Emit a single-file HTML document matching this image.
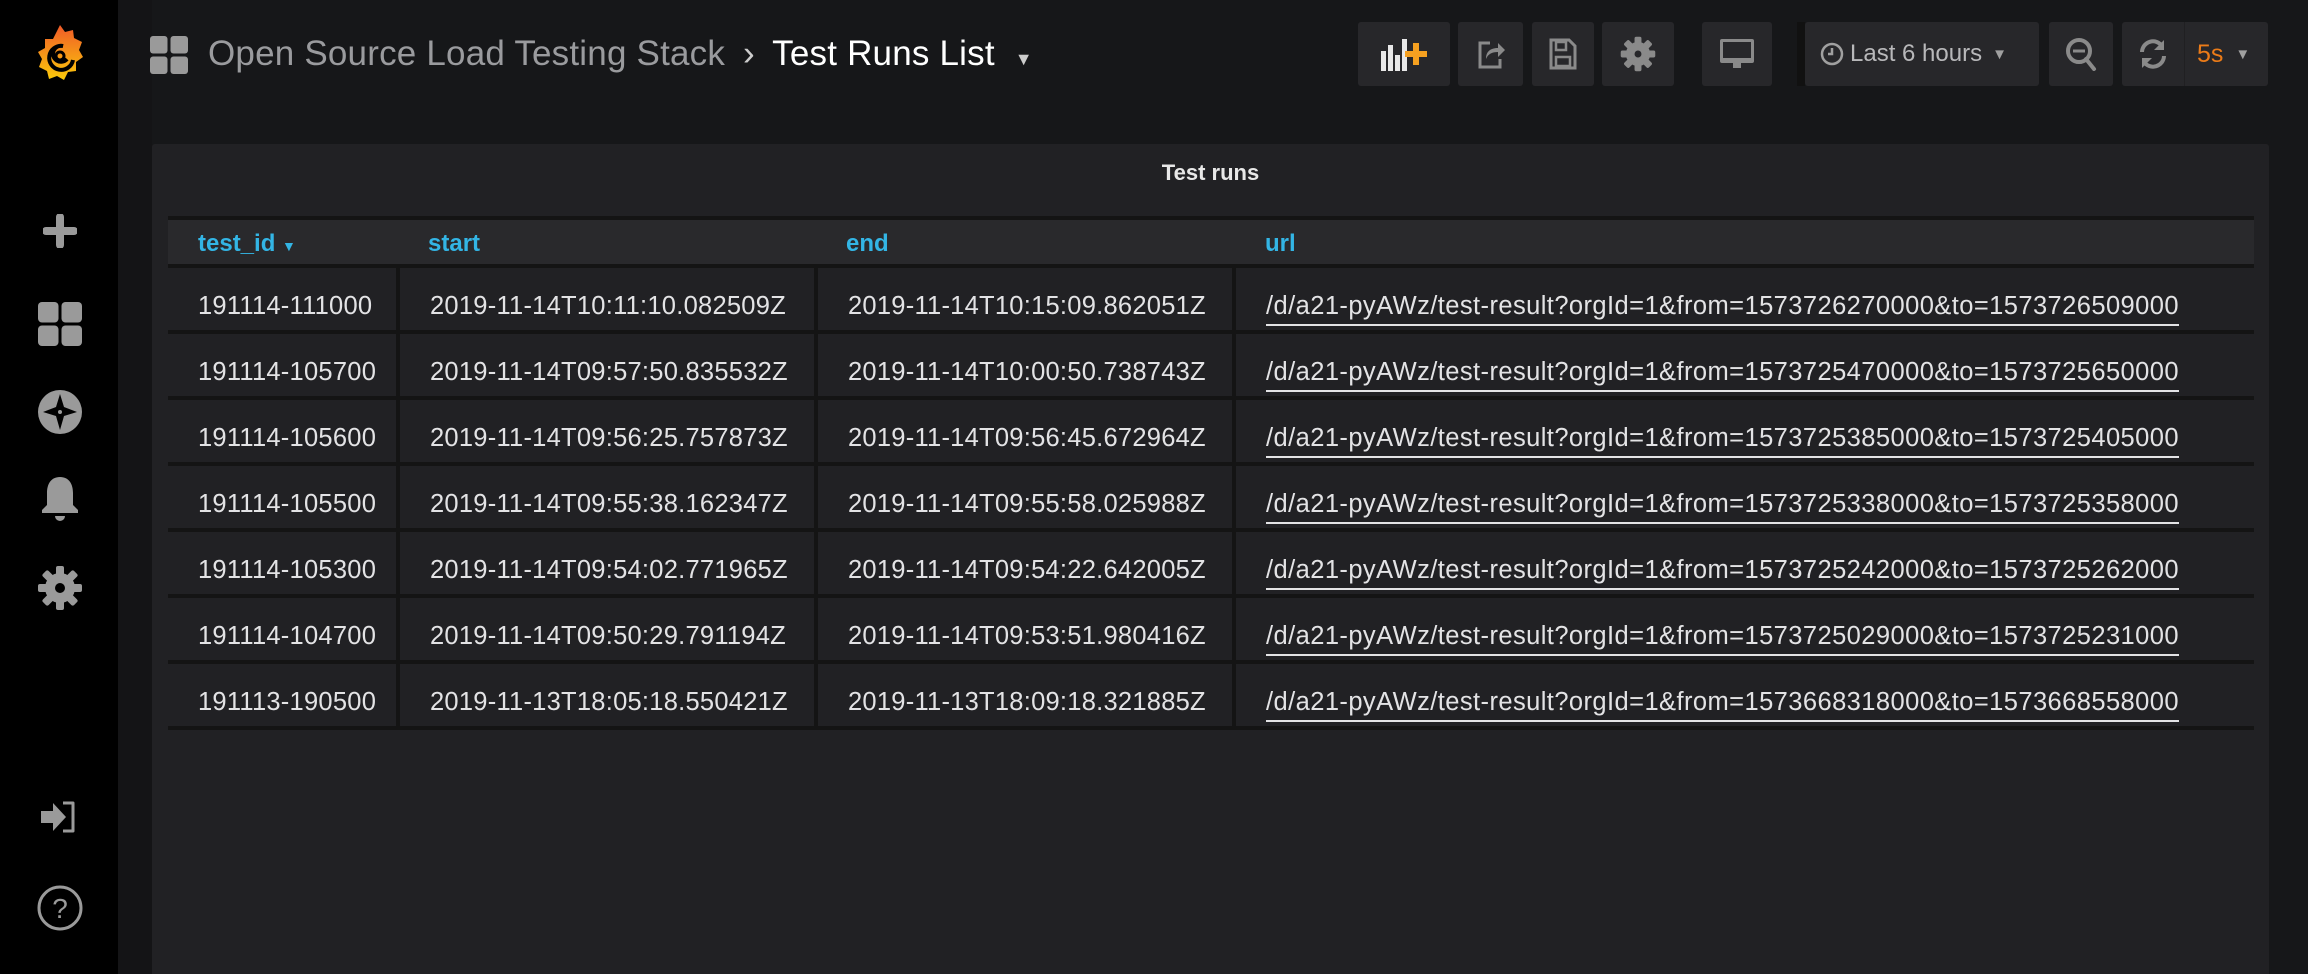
<!DOCTYPE html>
<html><head><meta charset="utf-8"><style>
*{margin:0;padding:0;box-sizing:border-box}
html,body{width:2308px;height:974px;overflow:hidden}
body{background:#161719;font-family:"Liberation Sans",sans-serif;position:relative}
.side{position:absolute;left:0;top:0;width:118px;height:974px;background:#000}
.strip{position:absolute;left:118px;top:0;width:34px;height:974px;background:#141416}
.ic{position:absolute;left:60px;transform:translate(-50%,-50%)}
.crumb{position:absolute;top:34px;left:208px;font-size:35px;color:#9a9b9e;white-space:nowrap;letter-spacing:0.2px}
.crumb b{font-weight:normal;color:#fff}
.btn{position:absolute;top:22px;height:64px;background:#27272a;border-radius:3px;display:flex;align-items:center;justify-content:center}
.panel{position:absolute;left:152px;top:144px;width:2117px;height:830px;background:#212124;border-radius:3px 3px 0 0}
.ptitle{position:absolute;top:160px;left:152px;width:2117px;text-align:center;color:#e8e8e8;font-weight:bold;font-size:22px}
.thead{position:absolute;left:168px;top:216px;width:2086px;height:52px;background:#141414}
.thead .in{position:absolute;left:0;top:4px;width:100%;height:44px;background:#29292c}
.th{position:absolute;top:10px;color:#33b5e5;font-weight:bold;font-size:24px}
.row{position:absolute;left:168px;width:2086px;height:66px;background:#141414}
.cell{position:absolute;top:0;height:62px;background:#212124;color:#e3e3e5;font-size:25.5px;line-height:62px;padding-top:7px;padding-left:30px;white-space:nowrap;letter-spacing:0.25px}
.cell u{text-decoration:none;border-bottom:2px solid #e3e3e5;padding-bottom:4px;letter-spacing:0.42px}
</style></head><body>
<div class="side"></div><div class="strip"></div>
<svg class="ic" style="top:55px" width="46" height="64" viewBox="0 0 46 64"><defs><linearGradient id="g" x1="0" y1="0" x2="0" y2="1"><stop offset="0" stop-color="#f05a28"/><stop offset="1" stop-color="#fbca0a"/></linearGradient></defs><path d="M23 2l5 7 8-2 1 8 8 4-3 8 4 7-7 5v9l-8 1-4 8-7-4-8 3-2-8-8-4 3-8-4-7 7-4 0-9 8 0z" fill="url(#g)"/><path d="M30 36a8 8 0 1 1-4-13a12 12 0 1 0 10 14" fill="none" stroke="#000" stroke-width="4"/><circle cx="23" cy="33" r="4" fill="none" stroke="#000" stroke-width="3"/></svg>
<svg class="ic" style="top:231px" width="34" height="34" viewBox="0 0 34 34"><path d="M17 3v28M3 17h28" stroke="#9a9a9a" stroke-width="8" stroke-linecap="round"/></svg>
<svg class="ic" style="top:324px" width="44" height="44" viewBox="0 0 44 44" fill="#9a9a9a"><rect x="0" y="0" width="20.5" height="20.5" rx="4"/><rect x="23.5" y="0" width="20.5" height="20.5" rx="4"/><rect x="0" y="23.5" width="20.5" height="20.5" rx="4"/><rect x="23.5" y="23.5" width="20.5" height="20.5" rx="4"/></svg>
<svg class="ic" style="top:412px" width="44" height="44" viewBox="0 0 44 44"><circle cx="22" cy="22" r="22" fill="#9a9a9a"/><path d="M22 4l4 13 13 5-13 4-4 14-4-14-13-4 13-5z" fill="#000"/><circle cx="22" cy="22" r="2" fill="#9a9a9a"/></svg>
<svg class="ic" style="top:500px" width="38" height="46" viewBox="0 0 38 46" fill="#9a9a9a"><path d="M19 0c9 0 13 7 13 16v12l5 5v3H1v-3l5-5V16C6 7 10 0 19 0z"/><path d="M14 39h10a5 5 0 0 1-10 0z"/></svg>
<svg class="ic" style="top:588px" width="44" height="44" viewBox="0 0 44 44"><g fill="#9a9a9a"><circle cx="22" cy="22" r="15"/><g id="t"><rect x="18" y="0" width="8" height="44" rx="2"/></g><use href="#t" transform="rotate(45 22 22)"/><use href="#t" transform="rotate(90 22 22)"/><use href="#t" transform="rotate(135 22 22)"/></g><circle cx="22" cy="22" r="5" fill="#000"/></svg>
<svg class="ic" style="top:817px" width="38" height="32" viewBox="0 0 38 32"><path d="M0 10h12V2l13 14-13 14v-8H0z" fill="#9a9a9a"/><path d="M22 2h10v28H22" fill="none" stroke="#9a9a9a" stroke-width="3" stroke-linejoin="round"/></svg>
<svg class="ic" style="top:908px" width="46" height="46" viewBox="0 0 46 46"><circle cx="23" cy="23" r="21" fill="none" stroke="#9a9a9a" stroke-width="3"/><text x="23" y="33" text-anchor="middle" font-family="Liberation Sans" font-size="28" fill="#9a9a9a">?</text></svg>
<svg style="position:absolute;left:150px;top:36px" width="38" height="38" viewBox="0 0 38 38" fill="#9a9a9a"><rect x="0" y="0" width="17.5" height="17.5" rx="3"/><rect x="20.5" y="0" width="17.5" height="17.5" rx="3"/><rect x="0" y="20.5" width="17.5" height="17.5" rx="3"/><rect x="20.5" y="20.5" width="17.5" height="17.5" rx="3"/></svg>
<div class="crumb">Open Source Load Testing Stack <span style="color:#ccc;margin:0 8px">›</span> <b>Test Runs List</b> <span style="color:#ccc;font-size:18px;margin-left:10px">▼</span></div>
<div class="btn" style="left:1358px;width:92px"><svg width="52" height="34" viewBox="0 0 52 34"><g fill="#e8e8e8"><rect x="3" y="14" width="5" height="20"/><rect x="10" y="8" width="5" height="26"/><rect x="17" y="18" width="5" height="16"/><rect x="24" y="2" width="5" height="32"/></g><path d="M38 6v22M27 17h22" stroke="#f5a020" stroke-width="6"/></svg></div>
<div class="btn" style="left:1458px;width:65px"><svg width="30" height="30" viewBox="0 0 30 30"><path d="M14 4H4v24h20v-8" fill="none" stroke="#8a8a8a" stroke-width="3"/><path d="M10 20c0-8 5-11 12-11V4l7 7-7 7v-5c-6 0-10 2-12 7z" fill="#8a8a8a"/></svg></div>
<div class="btn" style="left:1532px;width:62px"><svg width="28" height="32" viewBox="0 0 28 32"><path d="M2 2h18l6 6v22H2z" fill="none" stroke="#8a8a8a" stroke-width="3"/><rect x="7" y="4" width="10" height="8" fill="none" stroke="#8a8a8a" stroke-width="2.5"/><rect x="7" y="19" width="14" height="9" fill="none" stroke="#8a8a8a" stroke-width="2.5"/></svg></div>
<div class="btn" style="left:1602px;width:72px"><svg width="38" height="38" viewBox="0 0 44 44"><g fill="#8a8a8a"><circle cx="22" cy="22" r="14"/><g id="t2"><rect x="18" y="2" width="8" height="40" rx="2"/></g><use href="#t2" transform="rotate(45 22 22)"/><use href="#t2" transform="rotate(90 22 22)"/><use href="#t2" transform="rotate(135 22 22)"/></g><circle cx="22" cy="22" r="4" fill="#27272a"/></svg></div>
<div class="btn" style="left:1702px;width:70px"><svg width="36" height="32" viewBox="0 0 36 32"><rect x="1" y="1" width="34" height="24" rx="2" fill="#8a8a8a"/><rect x="4" y="4" width="28" height="16" fill="#27272a"/><rect x="14" y="25" width="8" height="5" fill="#8a8a8a"/></svg></div>
<div style="position:absolute;left:1797px;top:22px;width:8px;height:64px;background:#111"></div>
<div class="btn" style="left:1805px;width:234px;justify-content:flex-start;padding-left:15px;color:#b8b8ba;font-size:24px"><svg width="24" height="24" viewBox="0 0 24 24" style="margin-right:6px"><circle cx="12" cy="12" r="10" fill="none" stroke="#a0a0a0" stroke-width="2.5"/><path d="M12 6v6H8" fill="none" stroke="#a0a0a0" stroke-width="2.5"/></svg>Last 6 hours<span style="font-size:15px;margin-left:10px;color:#a0a0a0">▼</span></div>
<div class="btn" style="left:2049px;width:64px"><svg width="32" height="34" viewBox="0 0 32 34"><circle cx="14" cy="14" r="11" fill="none" stroke="#8a8a8a" stroke-width="4"/><path d="M21 22l8 10" stroke="#8a8a8a" stroke-width="4" stroke-linecap="round"/><path d="M8 14h12" stroke="#8a8a8a" stroke-width="3"/></svg></div>
<div class="btn" style="left:2122px;width:146px;justify-content:flex-start"><div style="width:63px;height:64px;display:flex;align-items:center;justify-content:center;border-right:1px solid #202022"><svg width="30" height="32" viewBox="0 0 30 32"><path d="M4 14A11 11 0 0 1 24 8" fill="none" stroke="#8a8a8a" stroke-width="4"/><path d="M26 2v10H16z" fill="#8a8a8a"/><path d="M26 18A11 11 0 0 1 6 24" fill="none" stroke="#8a8a8a" stroke-width="4"/><path d="M4 30V20h10z" fill="#8a8a8a"/></svg></div><span style="color:#eb7b18;font-size:25px;margin-left:12px">5s</span><span style="font-size:15px;margin-left:12px;color:#a0a0a0">▼</span></div>
<div class="panel"></div>
<div class="ptitle">Test runs</div>
<div class="thead"><div class="in"></div>
<div class="th" style="left:30px;top:14px">test_id <span style="font-size:14px">▼</span></div>
<div class="th" style="left:260px;top:14px">start</div>
<div class="th" style="left:678px;top:14px">end</div>
<div class="th" style="left:1097px;top:14px">url</div></div>

<div class="row" style="top:268px"><div class="cell" style="left:0;width:228px">191114-111000</div><div class="cell" style="left:232px;width:414px">2019-11-14T10:11:10.082509Z</div><div class="cell" style="left:650px;width:414px">2019-11-14T10:15:09.862051Z</div><div class="cell" style="left:1068px;width:1018px"><u>/d/a21-pyAWz/test-result?orgId=1&amp;from=1573726270000&amp;to=1573726509000</u></div></div>
<div class="row" style="top:334px"><div class="cell" style="left:0;width:228px">191114-105700</div><div class="cell" style="left:232px;width:414px">2019-11-14T09:57:50.835532Z</div><div class="cell" style="left:650px;width:414px">2019-11-14T10:00:50.738743Z</div><div class="cell" style="left:1068px;width:1018px"><u>/d/a21-pyAWz/test-result?orgId=1&amp;from=1573725470000&amp;to=1573725650000</u></div></div>
<div class="row" style="top:400px"><div class="cell" style="left:0;width:228px">191114-105600</div><div class="cell" style="left:232px;width:414px">2019-11-14T09:56:25.757873Z</div><div class="cell" style="left:650px;width:414px">2019-11-14T09:56:45.672964Z</div><div class="cell" style="left:1068px;width:1018px"><u>/d/a21-pyAWz/test-result?orgId=1&amp;from=1573725385000&amp;to=1573725405000</u></div></div>
<div class="row" style="top:466px"><div class="cell" style="left:0;width:228px">191114-105500</div><div class="cell" style="left:232px;width:414px">2019-11-14T09:55:38.162347Z</div><div class="cell" style="left:650px;width:414px">2019-11-14T09:55:58.025988Z</div><div class="cell" style="left:1068px;width:1018px"><u>/d/a21-pyAWz/test-result?orgId=1&amp;from=1573725338000&amp;to=1573725358000</u></div></div>
<div class="row" style="top:532px"><div class="cell" style="left:0;width:228px">191114-105300</div><div class="cell" style="left:232px;width:414px">2019-11-14T09:54:02.771965Z</div><div class="cell" style="left:650px;width:414px">2019-11-14T09:54:22.642005Z</div><div class="cell" style="left:1068px;width:1018px"><u>/d/a21-pyAWz/test-result?orgId=1&amp;from=1573725242000&amp;to=1573725262000</u></div></div>
<div class="row" style="top:598px"><div class="cell" style="left:0;width:228px">191114-104700</div><div class="cell" style="left:232px;width:414px">2019-11-14T09:50:29.791194Z</div><div class="cell" style="left:650px;width:414px">2019-11-14T09:53:51.980416Z</div><div class="cell" style="left:1068px;width:1018px"><u>/d/a21-pyAWz/test-result?orgId=1&amp;from=1573725029000&amp;to=1573725231000</u></div></div>
<div class="row" style="top:664px"><div class="cell" style="left:0;width:228px">191113-190500</div><div class="cell" style="left:232px;width:414px">2019-11-13T18:05:18.550421Z</div><div class="cell" style="left:650px;width:414px">2019-11-13T18:09:18.321885Z</div><div class="cell" style="left:1068px;width:1018px"><u>/d/a21-pyAWz/test-result?orgId=1&amp;from=1573668318000&amp;to=1573668558000</u></div></div>
</body></html>
